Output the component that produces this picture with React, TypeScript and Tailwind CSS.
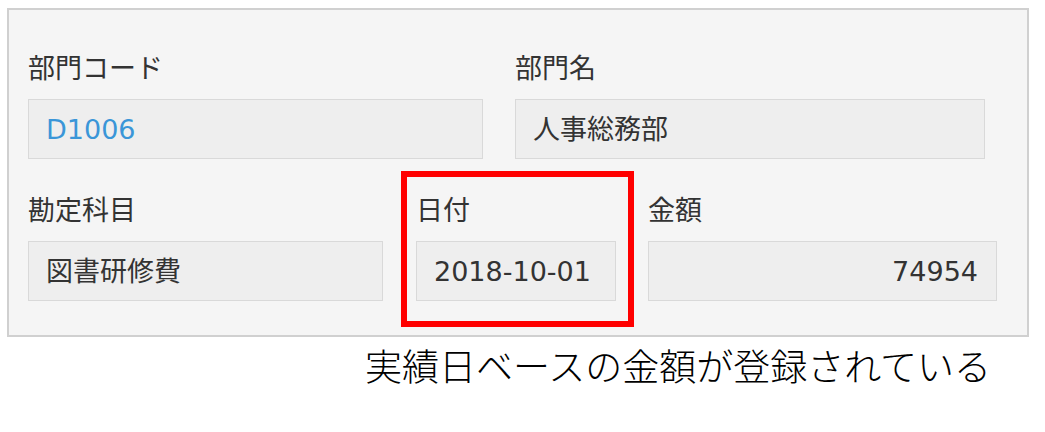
const font = {
	fontFamily: '"DejaVu Sans", "Noto Sans CJK JP", sans-serif',
};

type FieldProps = {
	label: string;
	value: string;
	width: string;
	valueClass?: string;
	right?: boolean;
	highlight?: boolean;
};

function Field({ label, value, width, valueClass, right, highlight }: FieldProps) {
	return (
		<div className={`relative flex flex-col ${width}`}>
			<div className="mb-[17px] h-[27px] text-[27px] leading-[27px] text-[#333333]">
				{label}
			</div>
			<div
				className={`flex h-[60px] items-center border border-[#d9d9d9] bg-[#eeeeee] text-[27px] leading-none ${
					right ? "justify-end pr-[18px]" : "pl-[17px]"
				} ${valueClass ?? "text-[#333333]"}`}
			>
				{value}
			</div>
			{highlight && (
				<div className="pointer-events-none absolute -top-[26px] -right-[18px] -bottom-[26px] -left-[15px] border-[6px] border-[#ff0000]" />
			)}
		</div>
	);
}

export default function App() {
	return (
		<div className="h-[432px] w-[1045px] bg-white pt-[8px]" style={font}>
			<div className="ml-[7px] w-[1022px] border-2 border-[#d0d0d0] bg-[#f5f5f5] pt-[45px] pb-[34px] pl-[19px]">
				<div className="flex gap-[32px]">
					<Field
						label="部門コード"
						value="D1006"
						width="w-[455px]"
						valueClass="text-[#3a96d8]"
					/>
					<Field label="部門名" value="人事総務部" width="w-[470px]" />
				</div>
				<div className="mt-[38px] flex">
					<Field label="勘定科目" value="図書研修費" width="w-[355px]" />
					<div className="ml-[33px]">
						<Field label="日付" value="2018-10-01" width="w-[200px]" highlight />
					</div>
					<div className="ml-[32px]">
						<Field label="金額" value="74954" width="w-[349px]" right />
					</div>
				</div>
			</div>
			<div
				className="mt-[10px] ml-[365px] text-[37px] font-light leading-none text-black"
				style={{ fontFamily: '"Noto Sans CJK JP", sans-serif' }}
			>
				実績日ベースの金額が登録されている
			</div>
		</div>
	);
}
